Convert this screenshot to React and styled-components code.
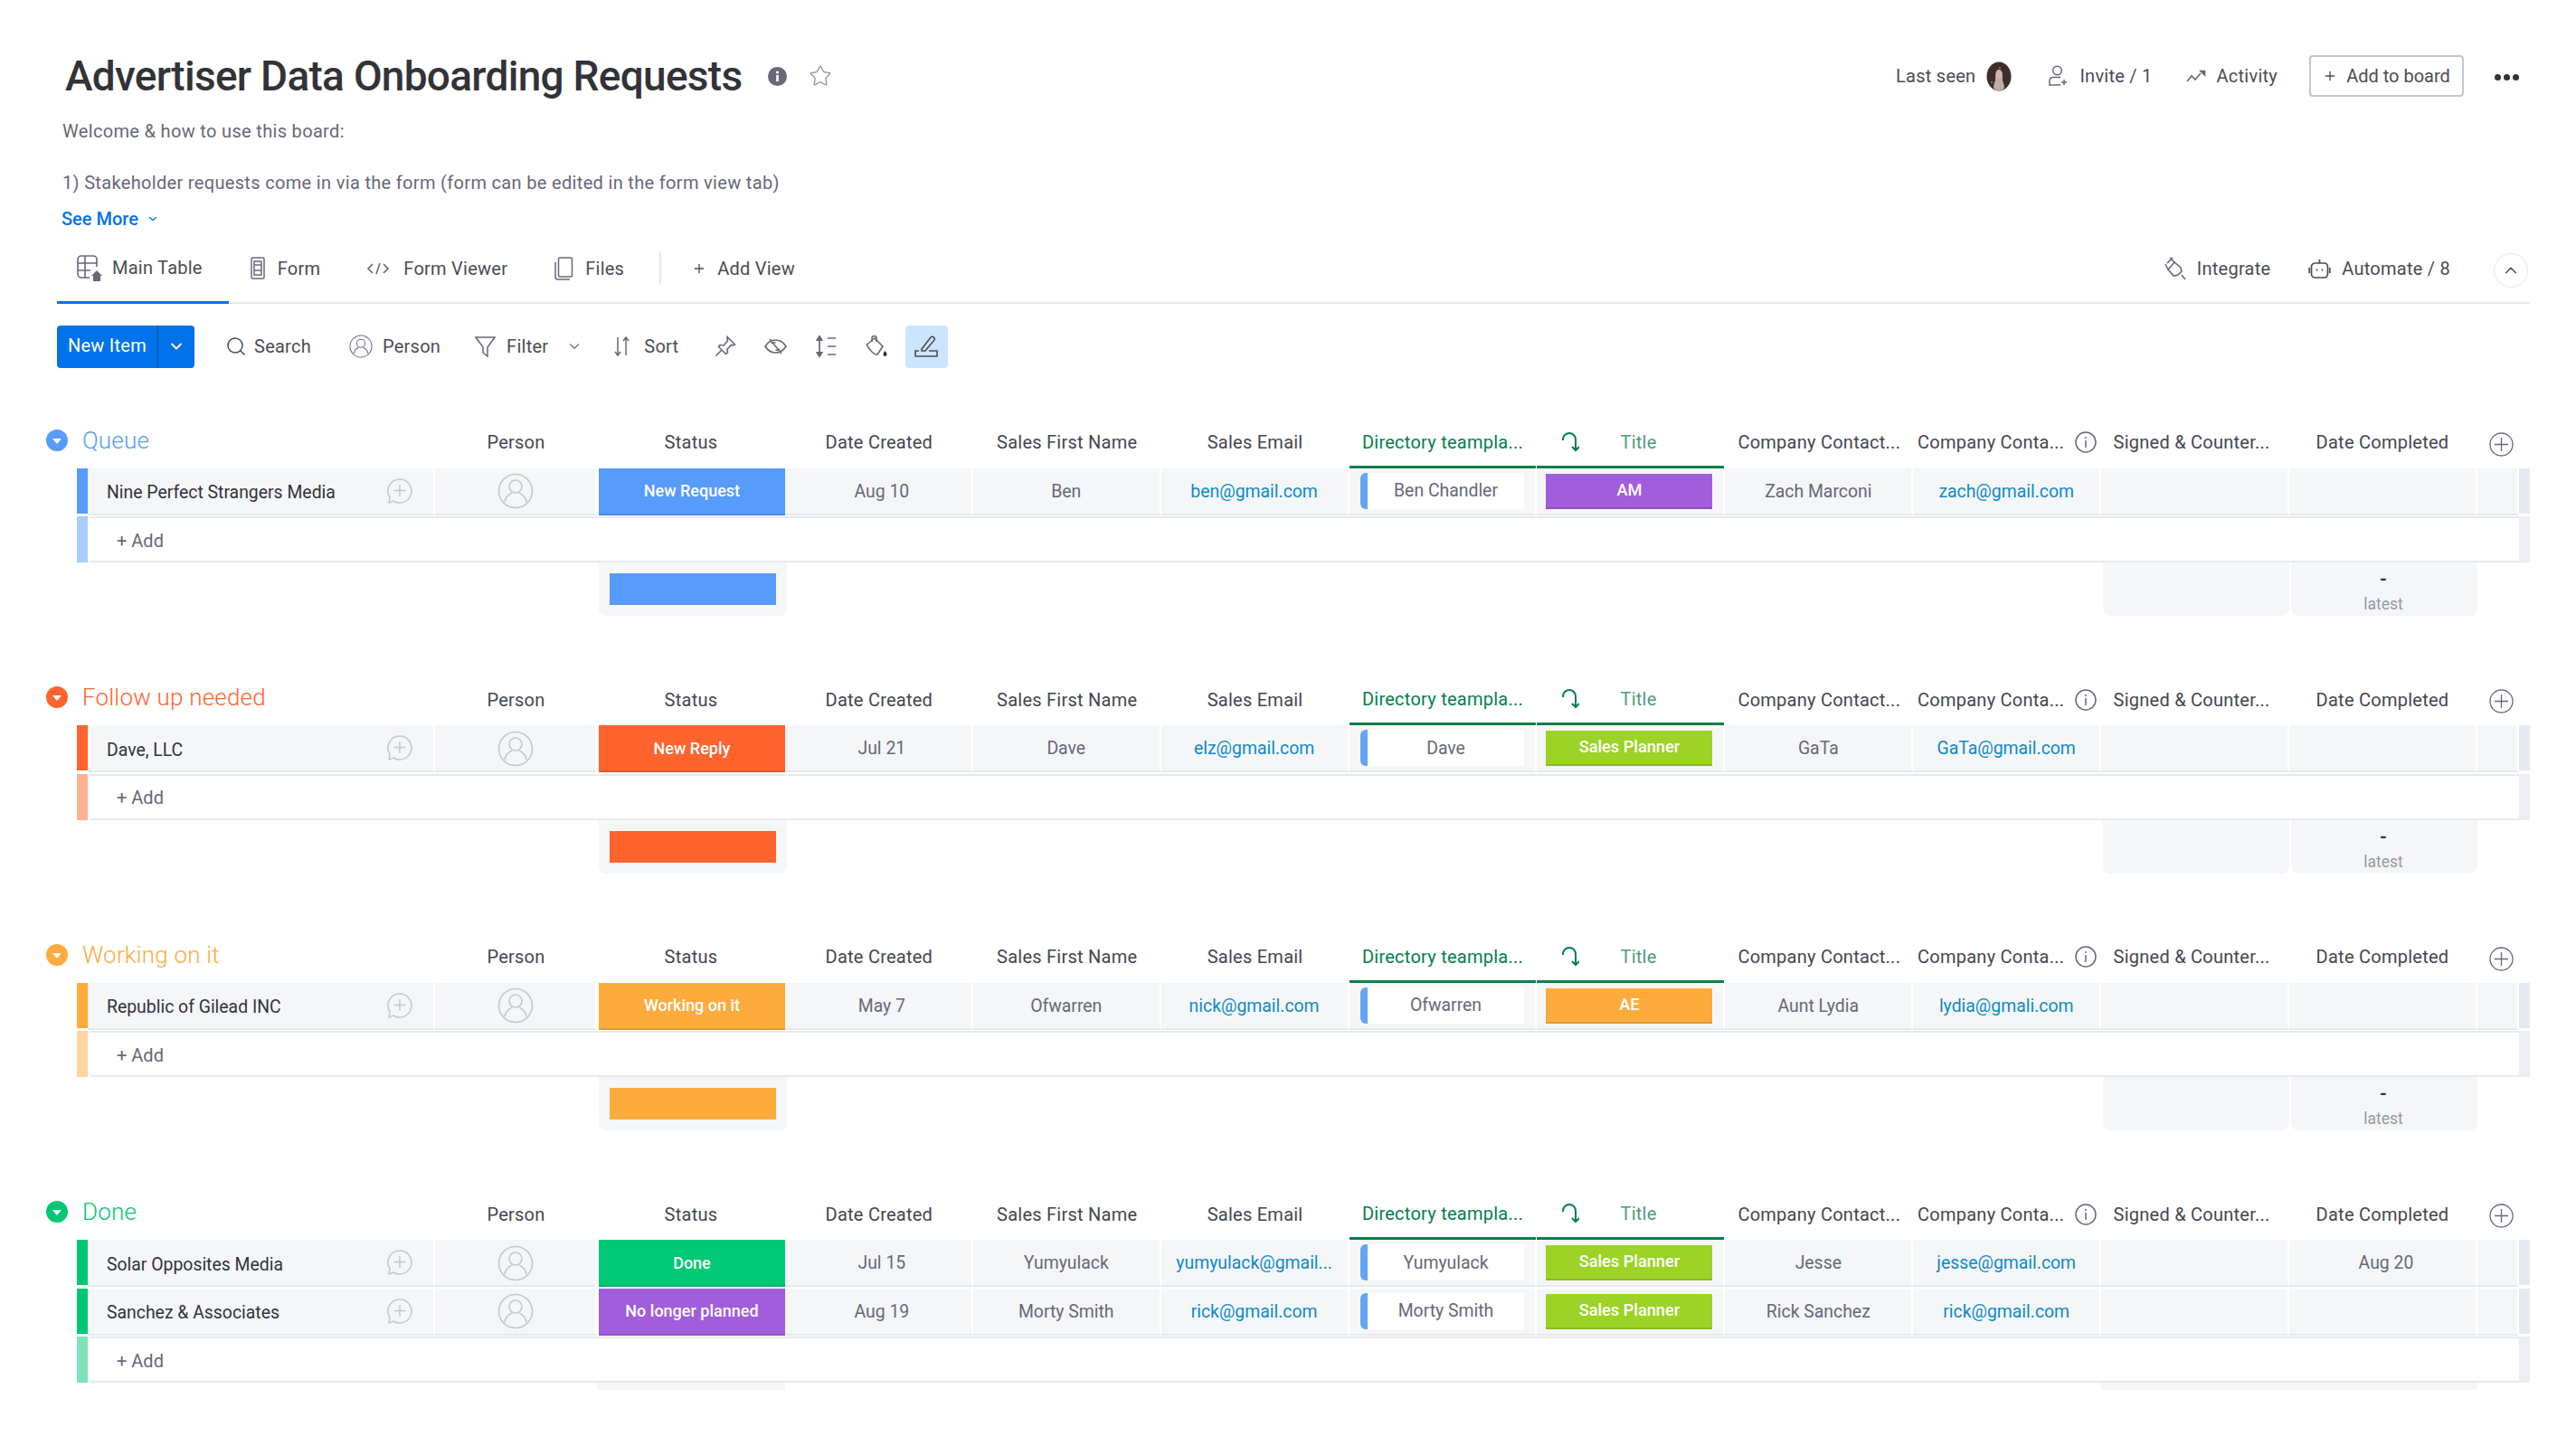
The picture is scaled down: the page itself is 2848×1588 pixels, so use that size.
import React from 'react';
import styled, { createGlobalStyle, css } from 'styled-components';
import { Star, Search, ChevronDown, ChevronUp, Plus } from 'lucide-react';

const BLUE = '#579bfc';
const RED = '#ff642e';
const ORANGE = '#fdab3d';
const GREEN = '#00c875';
const PURPLE = '#a25ddc';
const LIME = '#9cd326';

const groups = [
  {
    name: 'Queue', color: BLUE,
    rows: [
      { name: 'Nine Perfect Strangers Media', status: 'New Request', statusColor: BLUE, date: 'Aug 10', first: 'Ben', email: 'ben@gmail.com', dir: 'Ben Chandler', title: 'AM', titleColor: PURPLE, contact: 'Zach Marconi', contactEmail: 'zach@gmail.com', completed: '' },
    ],
  },
  {
    name: 'Follow up needed', color: RED,
    rows: [
      { name: 'Dave, LLC', status: 'New Reply', statusColor: RED, date: 'Jul 21', first: 'Dave', email: 'elz@gmail.com', dir: 'Dave', title: 'Sales Planner', titleColor: LIME, contact: 'GaTa', contactEmail: 'GaTa@gmail.com', completed: '' },
    ],
  },
  {
    name: 'Working on it', color: ORANGE,
    rows: [
      { name: 'Republic of Gilead INC', status: 'Working on it', statusColor: ORANGE, date: 'May 7', first: 'Ofwarren', email: 'nick@gmail.com', dir: 'Ofwarren', title: 'AE', titleColor: ORANGE, contact: 'Aunt Lydia', contactEmail: 'lydia@gmali.com', completed: '' },
    ],
  },
  {
    name: 'Done', color: GREEN, cutOff: true,
    rows: [
      { name: 'Solar Opposites Media', status: 'Done', statusColor: GREEN, date: 'Jul 15', first: 'Yumyulack', email: 'yumyulack@gmail...', dir: 'Yumyulack', title: 'Sales Planner', titleColor: LIME, contact: 'Jesse', contactEmail: 'jesse@gmail.com', completed: 'Aug 20' },
      { name: 'Sanchez & Associates', status: 'No longer planned', statusColor: PURPLE, date: 'Aug 19', first: 'Morty Smith', email: 'rick@gmail.com', dir: 'Morty Smith', title: 'Sales Planner', titleColor: LIME, contact: 'Rick Sanchez', contactEmail: 'rick@gmail.com', completed: '' },
    ],
  },
];

const GlobalStyle = createGlobalStyle`
  html, body {
    margin: 0;
    padding: 0;
    background: #fff;
    overflow: hidden;
  }
  body {
    font-family: Roboto, "Liberation Sans", sans-serif;
    font-size: 20px;
    color: #323338;
  }
  * {
    box-sizing: border-box;
  }
`;

const Page = styled.div`
  width: 2848px;
  height: 1588px;
  overflow: hidden;
  background: #fff;
`;

const TitleRow = styled.header`
  display: flex;
  align-items: center;
  height: 56px;
  margin-top: 56px;
  padding: 0 63px 0 72px;
`;

const BoardTitle = styled.h1`
  margin: 0;
  font-size: 46px;
  font-weight: 500;
  letter-spacing: -0.72px;
  line-height: 56px;
  color: #323338;
`;

const TitleIcons = styled.div`
  display: flex;
  align-items: center;
  gap: 24px;
  margin-left: 29px;
`;

const HeaderActions = styled.div`
  display: flex;
  align-items: center;
  margin-left: auto;
`;

const HeaderAction = styled.div`
  display: flex;
  align-items: center;
  gap: ${(p) => p.$gap || 12}px;
  margin-left: ${(p) => p.$left || 0}px;
  color: #4a4c55;
  font-size: 20px;
  letter-spacing: 0.25px;
  white-space: nowrap;
`;

const AddToBoard = styled.div`
  display: flex;
  align-items: center;
  justify-content: center;
  gap: 10px;
  width: 171px;
  height: 46px;
  margin-left: 35px;
  border: 2px solid #c5c7d0;
  border-radius: 4px;
  color: #4a4c55;
  font-size: 20px;
`;

const MoreDots = styled.div`
  display: flex;
  gap: 3px;
  margin: 3px 0 0 34px;
`;

const Dot = styled.span`
  width: 7px;
  height: 7px;
  border-radius: 50%;
  background: #323338;
`;

const Description = styled.div`
  margin-top: 19px;
  padding-left: 69px;
  color: #676879;
  font-size: 20px;
  letter-spacing: 0.33px;
  line-height: 28.5px;
`;

const DescLine = styled.p`
  margin: 0;
  min-height: 28.5px;
`;

const SeeMore = styled.a`
  display: flex;
  align-items: center;
  gap: 9px;
  height: 28px;
  margin: 11px 0 0 68px;
  color: #0073ea;
  font-size: 20px;
  font-weight: 500;
`;

const TabsBar = styled.nav`
  display: flex;
  align-items: stretch;
  width: 2734px;
  height: 76px;
  margin: 4px 0 0 63px;
  padding-right: 2px;
  border-bottom: 2px solid #e6e9ef;
`;

const Tab = styled.div`
  display: flex;
  align-items: center;
  gap: ${(p) => p.$gap || 14}px;
  padding: ${(p) => (p.$active ? '0 29px 0 21px' : '0 26px 0 24px')};
  color: #4a4c55;
  font-size: 20px;
  letter-spacing: 0.25px;
  white-space: nowrap;
  ${(p) =>
    p.$active &&
    css`
      margin-bottom: -2px;
      border-bottom: 3px solid #0073ea;
    `}
`;

const TabDivider = styled.span`
  align-self: center;
  width: 2px;
  height: 36px;
  margin: 0 10px 0 13px;
  background: #e6e9ef;
`;

const TabsRight = styled.div`
  display: flex;
  align-items: center;
  margin-left: auto;
`;

const CollapseCircle = styled.div`
  display: flex;
  align-items: center;
  justify-content: center;
  width: 38px;
  height: 38px;
  margin: 5px 0 0 48px;
  border: 1.5px solid #e6e9ef;
  border-radius: 50%;
`;

const Toolbar = styled.div`
  display: flex;
  align-items: center;
  height: 47px;
  margin: 24px 0 0 63px;
  color: #4a4c55;
  font-size: 20px;
  letter-spacing: 0.25px;
`;

const NewItem = styled.div`
  display: flex;
  width: 152px;
  height: 47px;
  border-radius: 4px;
  background: #0073ea;
  color: #fff;
`;

const NewItemLabel = styled.span`
  display: flex;
  align-items: center;
  justify-content: center;
  width: 112px;
  padding-bottom: 2px;
  border-right: 1px solid #00519f;
`;

const NewItemCaret = styled.span`
  display: flex;
  flex: 1;
  align-items: center;
  justify-content: center;
`;

const ToolItem = styled.div`
  display: flex;
  align-items: center;
  gap: ${(p) => p.$gap}px;
  margin-left: ${(p) => p.$left}px;
`;

const ToolButton = styled.div`
  display: flex;
  align-items: center;
  justify-content: center;
  width: 47px;
  height: 47px;
  margin-left: ${(p) => p.$left || 8.5}px;
  border-radius: 4px;
  background: ${(p) => (p.$active ? '#cce5ff' : 'transparent')};
`;

const Board = styled.main`
  margin-top: 55px;
  padding-left: 51px;
`;

const Group = styled.section`
  height: ${(p) => (p.$cutOff ? 'auto' : '284.67px')};
`;

const tableGrid = css`
  display: grid;
  grid-template-columns: 34px 12px 384px 179px repeat(10, 207.9px) 46px 12px;
`;

const GroupHeader = styled.div`
  ${tableGrid}
  height: 56px;
`;

const GroupTitle = styled.div`
  display: flex;
  grid-column: 1 / span 3;
  align-items: center;
  gap: 16px;
  height: 50px;
  color: ${(p) => p.$color};
  font-size: 26px;
  font-weight: 300;
  letter-spacing: 0.2px;
`;

const ColLabel = styled.div`
  display: flex;
  align-items: center;
  justify-content: center;
  gap: ${(p) => p.$gap || 0}px;
  height: 56px;
  padding-bottom: 1px;
  padding-right: ${(p) => p.$shift || 0}px;
  color: #444651;
  font-size: 20px;
  letter-spacing: 0.25px;
  white-space: nowrap;
  ${(p) =>
    p.$mirror &&
    css`
      margin-right: 1px;
      padding-top: 1px;
      padding-bottom: 0;
      border-bottom: 3px solid #037f4c;
      color: #037f4c;
    `}
`;

const MirrorTitleLabel = styled(ColLabel)`
  justify-content: flex-start;
  padding-left: 27px;
`;

const TitleLabel = styled.span`
  color: #4f9c7c;
`;

const AddColumn = styled.div`
  display: flex;
  align-items: center;
  justify-content: center;
  height: 56px;
  padding: 3px 0 0 8px;
`;

const Row = styled.div`
  ${tableGrid}
  height: 51px;
  margin-bottom: 2.5px;
`;

const ColorBar = styled.div`
  grid-column: 2;
  background: ${(p) => p.$color};
  opacity: ${(p) => (p.$faded ? 0.5 : 1)};
  margin-bottom: ${(p) => (p.$faded ? 0 : 2)}px;
`;

const Cell = styled.div`
  display: flex;
  align-items: center;
  justify-content: center;
  min-width: 0;
  padding-top: 1px;
  border-right: 2px solid #fff;
  border-bottom: 2px solid #e6e9ef;
  background: #f5f6f8;
  color: #676879;
  font-size: 19.4px;
  white-space: nowrap;
`;

const NameCell = styled(Cell)`
  justify-content: space-between;
  padding: 4px 23px 0 21px;
  color: #323338;
`;

const CommentSlot = styled.span`
  display: flex;
  margin-top: -4px;
`;

const DateCell = styled(Cell)`
  padding-left: 8px;
`;

const EmailCell = styled(Cell)`
  color: #0e8ac9;
`;

const StatusCell = styled.div`
  display: flex;
  align-items: center;
  justify-content: center;
  padding-bottom: 2px;
  border-left: 2px solid #fff;
  background: ${(p) => p.$color};
  box-shadow: inset 0 -2px 0 rgba(0, 0, 0, 0.1);
  color: #fff;
  font-size: 18px;
  font-weight: 500;
  white-space: nowrap;
`;

const MirrorCell = styled(Cell)`
  justify-content: flex-start;
  padding: 0 12px 0 12px;
`;

const MirrorName = styled.div`
  display: flex;
  flex: 1;
  align-items: center;
  justify-content: center;
  height: 40px;
  border-left: 8px solid #64a6f5;
  border-radius: 6px 0 0 6px;
  background: #fff;
`;

const TitleCell = styled(Cell)`
  padding: 6px 12px 5px 10px;
`;

const TitleChip = styled.div`
  display: flex;
  flex: 1;
  align-items: center;
  justify-content: center;
  height: 39px;
  padding-bottom: 4px;
  background: ${(p) => p.$color};
  box-shadow: inset 0 -2px 0 rgba(0, 0, 0, 0.12);
  color: #fff;
  font-size: 18.2px;
  font-weight: 500;
`;

const RightBand = styled.div`
  background: ${(p) => (p.$light ? '#eceef2' : '#e6e9ef')};
  margin-bottom: ${(p) => (p.$light ? 0 : 2)}px;
`;

const AddRow = styled.div`
  ${tableGrid}
  height: 51px;
`;

const AddCell = styled.div`
  display: flex;
  grid-column: 3 / span 13;
  align-items: center;
  margin-left: 2px;
  padding: 2px 0 0 30px;
  border-top: 2px solid #e6e9ef;
  border-bottom: 2px solid #e6e9ef;
  background: #fff;
  color: #676879;
  font-size: 20px;
`;

const SummaryRow = styled.div`
  ${tableGrid}
  height: ${(p) => (p.$cutOff ? 8 : 59)}px;
`;

const SummaryStatus = styled.div`
  grid-column: 5;
  margin: 0 -2px 0 2px;
  padding: 12px;
  border-radius: 0 0 8px 8px;
  background: #f5f6f8;
`;

const SummaryBar = styled.div`
  height: 35px;
  background: ${(p) => p.$color};
`;

const SummaryBlank = styled.div`
  grid-column: ${(p) => p.$col};
  margin: ${(p) => (p.$cutOff ? 0 : '0 0 0 2px')};
  border-radius: ${(p) => (p.$cutOff ? 0 : '0 0 8px 8px')};
  background: #f5f6f8;
`;

const SummaryDate = styled.div`
  display: flex;
  grid-column: 14;
  flex-direction: column;
  align-items: center;
  margin-left: 2px;
  padding: 6px 2px 0 0;
  border-radius: 0 0 8px 8px;
  background: #f5f6f8;
`;

const SummaryValue = styled.span`
  height: 30px;
  color: #323338;
  font-size: 20px;
  font-weight: 700;
`;

const SummaryNote = styled.span`
  color: #9699a6;
  font-size: 17.5px;
`;

const InfoDot = () => (
  <svg width="21" height="21" viewBox="0 0 21 21">
    <circle cx="10.5" cy="10.5" r="10.5" fill="#676879" />
    <rect x="9.2" y="9" width="2.6" height="7" fill="#fff" />
    <circle cx="10.5" cy="6" r="1.6" fill="#fff" />
  </svg>
);

const Avatar = () => (
  <svg width="28" height="33" viewBox="0 0 28 33">
    <ellipse cx="14" cy="16.5" rx="13.5" ry="16" fill="#3b2f2e" />
    <path d="M9 31c-2-3 0-7 1-10 0-5 0-11 4-12 5 1 4 8 4 12 1 3 3 7 1 10-3 1.500-7 1.500-10 0z" fill="#bfaca6" />
    <ellipse cx="14" cy="14" rx="3.500" ry="5" fill="#d3b4a8" />
    <circle cx="6" cy="23" r="1" fill="#e0703c" />
    <circle cx="15" cy="7" r="1" fill="#e0703c" />
  </svg>
);

const InviteIcon = () => (
  <svg width="21" height="24" viewBox="0 0 21 24" fill="none" stroke="#676879" strokeWidth="1.500">
    <circle cx="9.500" cy="6" r="4.800" />
    <path d="M13 13.500H5c-2.500 0-4 1.500-4 4V22h12" />
    <path d="M17 16v6M14 19h6" />
  </svg>
);

const ActivityIcon = () => (
  <svg width="22" height="15" viewBox="0 0 22 15" fill="none" stroke="#676879" strokeWidth="1.600">
    <path d="M1 13l5-6 4 4 6-7" />
    <path d="M16 1.500h4.500V6l-4.500-4.500z" fill="#676879" />
  </svg>
);

const TableIcon = () => (
  <svg width="30" height="30" viewBox="0 0 30 30" fill="none" stroke="#676879" strokeWidth="1.600">
    <path d="M15 26H6a4 4 0 0 1-4-4V6a4 4 0 0 1 4-4h13a4 4 0 0 1 4 4v8" />
    <path d="M2 10h21M2 18h14M10 2v24" />
    <path d="M17 24l6-6 6 6h-2v6h-8v-6z" fill="#676879" stroke="none" />
  </svg>
);

const FormIcon = () => (
  <svg width="16" height="25" viewBox="0 0 16 25" fill="none" stroke="#676879" strokeWidth="1.500">
    <rect x="1" y="1" width="14" height="23" rx="1.500" />
    <path d="M4 5h8v4H4zM4 9h8v6H4zM4 15h8v5H4z" />
  </svg>
);

const CodeIcon = () => (
  <svg width="28" height="14" viewBox="0 0 28 14" fill="none" stroke="#676879" strokeWidth="1.600">
    <path d="M8 2L3 7l5 5M20 2l5 5-5 5M16 1l-4 12" />
  </svg>
);

const FilesIcon = () => (
  <svg width="24" height="26" viewBox="0 0 24 26" fill="none" stroke="#676879" strokeWidth="1.500">
    <rect x="6.500" y="1" width="15" height="21" rx="1.500" />
    <path d="M3 6v16a3 3 0 0 0 3 3h13" />
  </svg>
);

const IntegrateIcon = () => (
  <svg width="24" height="26" viewBox="0 0 24 26" fill="none" stroke="#676879" strokeWidth="1.600">
    <path d="M11 6l7 6 1 4-4 4-5 1-6-7z" />
    <path d="M6 1l5 5M1 8l3 6M9 1L3 7M19 20l4 5" />
  </svg>
);

const AutomateIcon = () => (
  <svg width="25" height="22" viewBox="0 0 25 22" fill="none" stroke="#4a4c55" strokeWidth="1.700">
    <rect x="3.500" y="5" width="18" height="16" rx="4" />
    <path d="M12.500 5V1M1.200 10v6M23.800 10v6M9.500 11.500v2M15.500 11.500v2" />
  </svg>
);

const PersonRing = ({ size = 26, color = '#676879' }) => (
  <svg width={size} height={size} viewBox="0 0 40 40" fill="none" stroke={color} strokeWidth="1.600">
    <circle cx="20" cy="20" r="18.500" />
    <circle cx="20" cy="15" r="7" />
    <path d="M8 32c1-6 6-9 8-10M32 32c-1-6-6-9-8-10" />
  </svg>
);

const FunnelIcon = () => (
  <svg width="23" height="23" viewBox="0 0 23 23" fill="none" stroke="#676879" strokeWidth="1.500">
    <path d="M1 1h21l-8 11v10l-5-4v-6z" />
  </svg>
);

const SortIcon = () => (
  <svg width="17" height="22" viewBox="0 0 17 22" fill="none" stroke="#676879" strokeWidth="1.500">
    <path d="M4 1v20M1 17l3 4 3-4M13 21V1M10 5l3-4 3 4" />
  </svg>
);

const PinIcon = () => (
  <svg width="24" height="24" viewBox="0 0 24 24" fill="none" stroke="#676879" strokeWidth="1.600">
    <path d="M14 1.500l8.500 8.500-2 1-2-.500-4.500 4.500.500 4-2 1.500-8-8 1.500-2 4 .500L14.500 6 14 3.500z" />
    <path d="M7.500 16.500L1.500 22.500" />
  </svg>
);

const HideIcon = () => (
  <svg width="25" height="22" viewBox="0 0 25 22" fill="none" stroke="#676879" strokeWidth="1.600">
    <path d="M1 11c3-5 7-7 11.500-7S21 6 24 11c-3 5-7 7-11.500 7S4 16 1 11z" />
    <path d="M8 8c1-1 3-1.500 4.500-1M17 14c-1 1-3 1.500-4.500 1" />
    <path d="M6 3l13 16" />
  </svg>
);

const RowHeightIcon = () => (
  <svg width="24" height="26" viewBox="0 0 24 26" fill="none" stroke="#676879" strokeWidth="1.700">
    <path d="M5 3v20" />
    <path d="M1.500 6.500L5 1l3.500 5.500zM1.500 19.500L5 25l3.500-5.500z" fill="#676879" strokeWidth="1" />
    <path d="M14 4h9M14 13h9M14 22h9" />
  </svg>
);

const BucketIcon = () => (
  <svg width="24" height="26" viewBox="0 0 24 26" fill="none" stroke="#676879" strokeWidth="1.600">
    <path d="M1.500 11L10 4l9 9-6 9c-3 1-10-6-11.500-11z" />
    <path d="M7 8V4a2.500 2.500 0 0 1 5 0v4" />
    <path d="M21.500 18c-1.500 2-2 3-2 4a2 2 0 0 0 4 0c0-1-.500-2-2-4z" fill="#323338" stroke="none" />
  </svg>
);

const PenIcon = () => (
  <svg width="26" height="26" viewBox="0 0 26 26" fill="none" stroke="#4a4c55" strokeWidth="1.600">
    <path d="M8 16L18 3c1-1 2.500-1 3.500 0s1 2.500 0 3.500L12 18H8z" />
    <path d="M5 18H1v6h24v-6h-9" />
  </svg>
);

const CommentPlus = () => (
  <svg width="28" height="28" viewBox="0 0 28 28" fill="none" stroke="#c5c7d0" strokeWidth="1.500">
    <path d="M14 1a13 13 0 1 1-7 24L2 27l1-6A13 13 0 0 1 14 1z" />
    <path d="M14 7v13M7.500 13.500h13" />
  </svg>
);

const GroupToggle = ({ color }) => (
  <svg width="24" height="24" viewBox="0 0 24 24">
    <circle cx="12" cy="12" r="12" fill={color} />
    <path d="M7 10h10l-5 6z" fill="#fff" />
  </svg>
);

const MirrorIcon = () => (
  <svg width="20" height="22" viewBox="0 0 20 22" fill="none" stroke="#037f4c" strokeWidth="2">
    <path d="M2 9V8a7 7 0 0 1 14 0v12" />
    <path d="M12 16l4 4 4-4" />
  </svg>
);

const ColumnInfo = () => (
  <svg width="24" height="24" viewBox="0 0 24 24" fill="none" stroke="#676879" strokeWidth="1.500">
    <circle cx="12" cy="12" r="11" />
    <path d="M12 10v8M12 6v2" />
  </svg>
);

const AddCircle = () => (
  <svg width="27" height="27" viewBox="0 0 27 27" fill="none" stroke="#676879" strokeWidth="1.300">
    <circle cx="13.500" cy="13.500" r="12.500" />
    <path d="M13.500 6v15M6 13.500h15" />
  </svg>
);

const GroupSummary = ({ group }) => {
  if (group.cutOff) {
    return (
      <SummaryRow $cutOff>
        <SummaryBlank $col={5} $cutOff />
        <SummaryBlank $col="13 / span 2" $cutOff />
      </SummaryRow>
    );
  }
  return (
    <SummaryRow>
      <SummaryStatus>
        <SummaryBar $color={group.color} />
      </SummaryStatus>
      <SummaryBlank $col={13} />
      <SummaryDate>
        <SummaryValue>-</SummaryValue>
        <SummaryNote>latest</SummaryNote>
      </SummaryDate>
    </SummaryRow>
  );
};

const BoardGroup = ({ group }) => (
  <Group $cutOff={group.cutOff}>
    <GroupHeader>
      <GroupTitle $color={group.color}>
        <GroupToggle color={group.color} />
        {group.name}
      </GroupTitle>
      <ColLabel>Person</ColLabel>
      <ColLabel>Status</ColLabel>
      <ColLabel>Date Created</ColLabel>
      <ColLabel>Sales First Name</ColLabel>
      <ColLabel>Sales Email</ColLabel>
      <ColLabel $mirror>Directory teampla...</ColLabel>
      <MirrorTitleLabel $mirror $gap={45}>
        <MirrorIcon />
        <TitleLabel>Title</TitleLabel>
      </MirrorTitleLabel>
      <ColLabel>Company Contact...</ColLabel>
      <ColLabel $gap={12}>
        Company Conta...
        <ColumnInfo />
      </ColLabel>
      <ColLabel $shift={8}>Signed &amp; Counter...</ColLabel>
      <ColLabel $shift={2}>Date Completed</ColLabel>
      <AddColumn>
        <AddCircle />
      </AddColumn>
    </GroupHeader>
    {group.rows.map((row) => (
      <Row key={row.name}>
        <ColorBar $color={group.color} />
        <NameCell>
          {row.name}
          <CommentSlot>
            <CommentPlus />
          </CommentSlot>
        </NameCell>
        <Cell>
          <PersonRing size={40} color="#c5c7d0" />
        </Cell>
        <StatusCell $color={row.statusColor}>{row.status}</StatusCell>
        <DateCell>{row.date}</DateCell>
        <Cell>{row.first}</Cell>
        <EmailCell>{row.email}</EmailCell>
        <MirrorCell>
          <MirrorName>{row.dir}</MirrorName>
        </MirrorCell>
        <TitleCell>
          <TitleChip $color={row.titleColor}>{row.title}</TitleChip>
        </TitleCell>
        <Cell>{row.contact}</Cell>
        <EmailCell>{row.contactEmail}</EmailCell>
        <Cell />
        <DateCell>{row.completed}</DateCell>
        <Cell />
        <RightBand />
      </Row>
    ))}
    <AddRow>
      <ColorBar $color={group.color} $faded />
      <AddCell>+ Add</AddCell>
      <RightBand $light />
    </AddRow>
    <GroupSummary group={group} />
  </Group>
);

const App = () => (
  <Page>
    <GlobalStyle />
    <TitleRow>
      <BoardTitle>Advertiser Data Onboarding Requests</BoardTitle>
      <TitleIcons>
        <InfoDot />
        <Star size={26} color="#9699a6" strokeWidth={1.3} />
      </TitleIcons>
      <HeaderActions>
        <HeaderAction>
          Last seen
          <Avatar />
        </HeaderAction>
        <HeaderAction $left={41} $gap={13}>
          <InviteIcon />
          Invite / 1
        </HeaderAction>
        <HeaderAction $left={37}>
          <ActivityIcon />
          Activity
        </HeaderAction>
        <AddToBoard>
          <Plus size={16} color="#4a4c55" />
          Add to board
        </AddToBoard>
        <MoreDots>
          <Dot />
          <Dot />
          <Dot />
        </MoreDots>
      </HeaderActions>
    </TitleRow>

    <Description>
      <DescLine>Welcome &amp; how to use this board:</DescLine>
      <DescLine />
      <DescLine>1) Stakeholder requests come in via the form (form can be edited in the form view tab)</DescLine>
    </Description>
    <SeeMore>
      See More
      <ChevronDown size={14} color="#0073ea" />
    </SeeMore>

    <TabsBar>
      <Tab $active $gap={10}>
        <TableIcon />
        Main Table
      </Tab>
      <Tab>
        <FormIcon />
        Form
      </Tab>
      <Tab>
        <CodeIcon />
        Form Viewer
      </Tab>
      <Tab $gap={12}>
        <FilesIcon />
        Files
      </Tab>
      <TabDivider />
      <Tab $gap={12}>
        <Plus size={16} color="#4a4c55" />
        Add View
      </Tab>
      <TabsRight>
        <HeaderAction>
          <IntegrateIcon />
          Integrate
        </HeaderAction>
        <HeaderAction $left={42}>
          <AutomateIcon />
          Automate / 8
        </HeaderAction>
        <CollapseCircle>
          <ChevronUp size={22} color="#4a4c55" strokeWidth={1.6} />
        </CollapseCircle>
      </TabsRight>
    </TabsBar>

    <Toolbar>
      <NewItem>
        <NewItemLabel>New Item</NewItemLabel>
        <NewItemCaret>
          <ChevronDown size={20} color="#fff" strokeWidth={2.2} />
        </NewItemCaret>
      </NewItem>
      <ToolItem $left={34} $gap={8}>
        <Search size={24} color="#4a4c55" strokeWidth={1.5} />
        Search
      </ToolItem>
      <ToolItem $left={42} $gap={11}>
        <PersonRing />
        Person
      </ToolItem>
      <ToolItem $left={38} $gap={12}>
        <FunnelIcon />
        Filter
      </ToolItem>
      <ToolItem $left={20} $gap={0}>
        <ChevronDown size={18} color="#676879" strokeWidth={1.5} />
      </ToolItem>
      <ToolItem $left={35} $gap={16}>
        <SortIcon />
        Sort
      </ToolItem>
      <ToolButton $left={28.5}>
        <PinIcon />
      </ToolButton>
      <ToolButton>
        <HideIcon />
      </ToolButton>
      <ToolButton>
        <RowHeightIcon />
      </ToolButton>
      <ToolButton>
        <BucketIcon />
      </ToolButton>
      <ToolButton $active>
        <PenIcon />
      </ToolButton>
    </Toolbar>

    <Board>
      {groups.map((group) => (
        <BoardGroup key={group.name} group={group} />
      ))}
    </Board>
  </Page>
);

export default App;
